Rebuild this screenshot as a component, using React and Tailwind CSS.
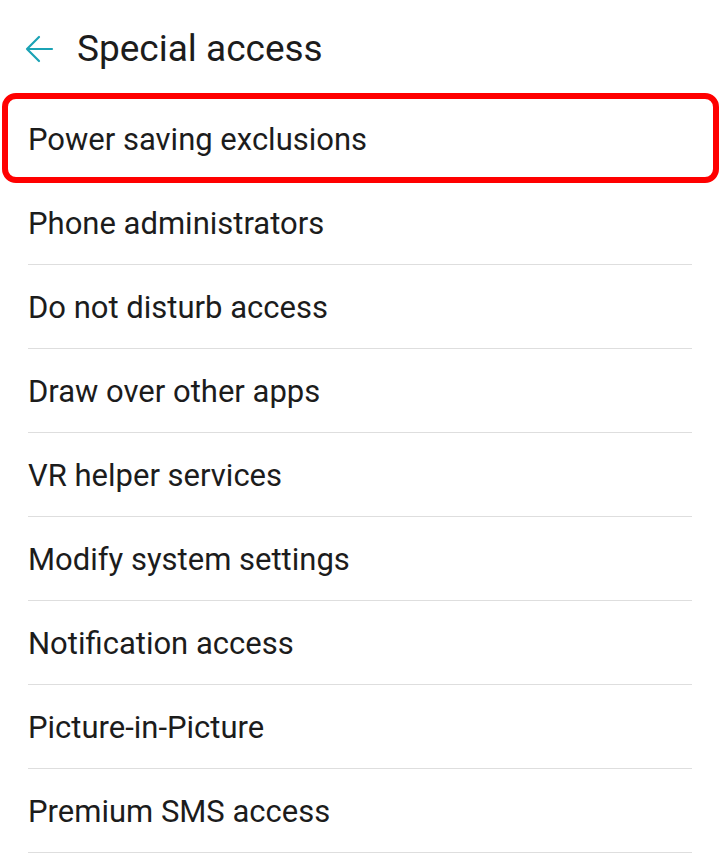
import React from 'react';

const items = [
  'Power saving exclusions',
  'Phone administrators',
  'Do not disturb access',
  'Draw over other apps',
  'VR helper services',
  'Modify system settings',
  'Notification access',
  'Picture-in-Picture',
  'Premium SMS access',
];

export default function App() {
  return (
    <div className="relative w-[720px] h-[858px] overflow-hidden bg-white text-[#1c1c1c]" style={{ fontFamily: 'Roboto, "Noto Sans", sans-serif' }}>
      {/* Header */}
      <div className="flex items-center h-[97px]">
        <svg className="ml-[24px] w-[30px] h-[30px]" viewBox="0 0 30 30" fill="none" stroke="#1ba3b5" strokeWidth="2.2" strokeLinecap="round" strokeLinejoin="round">
          <path d="M28 15H3M15 3L3 15l12 12" />
        </svg>
        <div className="ml-[23px] text-[37px] leading-none">Special access</div>
      </div>

      {/* List */}
      <div className="flex flex-col">
        {items.map((name) => (
          <div key={name} className="mx-[28px] h-[84px] flex items-center border-b border-[#dedede]">
            <span className="text-[31px] leading-none mt-[2px]">{name}</span>
          </div>
        ))}
      </div>

      {/* Highlight annotation */}
      <div className="absolute left-[2px] top-[93px] w-[717px] h-[90px] border-[6px] border-[#ff0000] rounded-[14px]" />
    </div>
  );
}
